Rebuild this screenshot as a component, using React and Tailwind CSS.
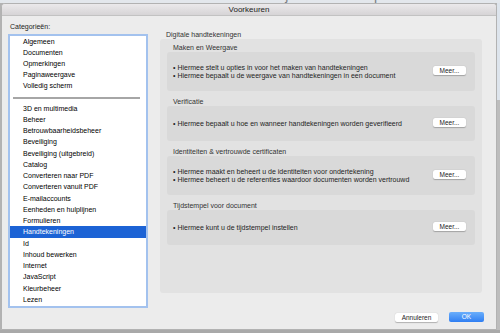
import React from 'react';

const topItems = ['Algemeen', 'Documenten', 'Opmerkingen', 'Paginaweergave', 'Volledig scherm'];

const restItems = [
  '3D en multimedia',
  'Beheer',
  'Betrouwbaarheidsbeheer',
  'Beveiliging',
  'Beveiliging (uitgebreid)',
  'Catalog',
  'Converteren naar PDF',
  'Converteren vanuit PDF',
  'E-mailaccounts',
  'Eenheden en hulplijnen',
  'Formulieren',
  'Handtekeningen',
  'Id',
  'Inhoud bewerken',
  'Internet',
  'JavaScript',
  'Kleurbeheer',
  'Lezen',
];

const sections = [
  {
    title: 'Maken en Weergave',
    lines: [
      'Hiermee stelt u opties in voor het maken van handtekeningen',
      'Hiermee bepaalt u de weergave van handtekeningen in een document',
    ],
  },
  {
    title: 'Verificatie',
    lines: ['Hiermee bepaalt u hoe en wanneer handtekeningen worden geverifieerd'],
  },
  {
    title: 'Identiteiten & vertrouwde certificaten',
    lines: [
      'Hiermee maakt en beheert u de identiteiten voor ondertekening',
      'Hiermee beheert u de referenties waardoor documenten worden vertrouwd',
    ],
  },
  {
    title: 'Tijdstempel voor document',
    lines: ['Hiermee kunt u de tijdstempel instellen'],
  },
];

function Section({ section, first }) {
  const twoLines = section.lines.length > 1;
  return (
    <div className={first ? '' : 'mt-[7px]'}>
      <div className="h-[8px] pl-[6px] text-[7px] leading-[8px] text-[#333]">{section.title}</div>
      <div
        className={`flex items-center rounded-[3px] bg-[#d9d9d9] pl-[6px] pr-[9px] ${
          twoLines ? 'h-[39px]' : 'h-[35px]'
        }`}
      >
        <div className="flex-1 pt-[1px]">
          {section.lines.map((line) => (
            <div key={line} className="h-[8px] text-[7px] leading-[8px] text-[#1e1e1e]">
              • {line}
            </div>
          ))}
        </div>
        <button className="-mt-[2px] flex h-[9px] w-[33px] items-center justify-center rounded-[2px] bg-white text-[6.5px] leading-[9px] text-[#222] shadow-[0_0.5px_1px_rgba(0,0,0,0.25)]">
          Meer...
        </button>
      </div>
    </div>
  );
}

export default function App() {
  return (
    <div className="flex h-[333px] w-[500px] flex-col overflow-hidden bg-[#b3b3b3] font-['Liberation_Sans',Arial,sans-serif]">
      <div className="h-[3px] overflow-hidden bg-[#e3e7ec]">
        <div className="-mt-[12px] pl-[258px] text-[14px] leading-[14px] text-[#7c7f84]">Bekijk hier snelle tips</div>
      </div>

      <div className="flex h-[327px]">
        <div className="ml-[1px] flex h-[327px] w-[496px] flex-col overflow-hidden rounded-t-[4px] border border-[#b2b2b2] bg-[#ececec]">
          <div className="flex h-[12px] items-center justify-center border-b border-[#c2c2c2] bg-gradient-to-b from-[#ebe9eb] to-[#d6d4d6] text-[8px] leading-[12px] text-[#222]">
            Voorkeuren
          </div>

          <div className="flex h-[292px]">
            <div className="pl-[6px] pt-[6px]">
              <div className="h-[10px] pl-[2px] text-[7px] leading-[10px] text-[#222]">Categorieën:</div>
              <div className="mt-[2px] h-[274px] w-[140px] border-2 border-[#a3c2ee] bg-white">
                {topItems.map((item) => (
                  <div key={item} className="h-[11px] pl-[13px] text-[7px] leading-[11px] text-black">
                    {item}
                  </div>
                ))}
                <div className="h-[11.5px] pt-[6px]">
                  <div className="ml-[3px] mr-[6px] h-[2px] bg-[#a6a6a6]" />
                </div>
                {restItems.map((item) => {
                  const active = item === 'Handtekeningen';
                  return (
                    <div
                      key={item}
                      className={`h-[11.25px] pl-[13px] text-[7px] leading-[11.25px] ${
                        active ? 'bg-[#1c63d5] text-white' : 'text-black'
                      }`}
                    >
                      {item}
                    </div>
                  );
                })}
              </div>
            </div>

            <div className="ml-[12px] w-[322px] pt-[14px]">
              <div className="h-[9px] pl-[6px] text-[7px] leading-[9px] text-[#333]">Digitale handtekeningen</div>
              <div className="h-[254px] rounded-[3px] bg-[#e2e2e2] px-[7px] pt-[5px]">
                {sections.map((section, i) => (
                  <Section key={section.title} section={section} first={i === 0} />
                ))}
              </div>
            </div>
          </div>

          <div className="flex items-start justify-end gap-[11px] pr-[12px] pt-[4px]">
            <button className="mt-[1px] flex h-[9px] w-[43px] items-center justify-center rounded-[2px] bg-white text-[6.5px] leading-[9px] text-[#222] shadow-[0_0.5px_1px_rgba(0,0,0,0.25)]">
              Annuleren
            </button>
            <button className="flex h-[10px] w-[35px] items-center justify-center rounded-[2px] bg-gradient-to-b from-[#6aaefb] to-[#2f7ef2] text-[6.5px] leading-[10px] text-white">
              OK
            </button>
          </div>
        </div>

        <div className="flex flex-1 flex-col">
          <div className="h-[97px] bg-[#dde4ec]" />
          <div className="flex-1 bg-[#bdbdbd]" />
        </div>
      </div>

      <div className="flex-1 bg-[#a9a9a9]" />
    </div>
  );
}
